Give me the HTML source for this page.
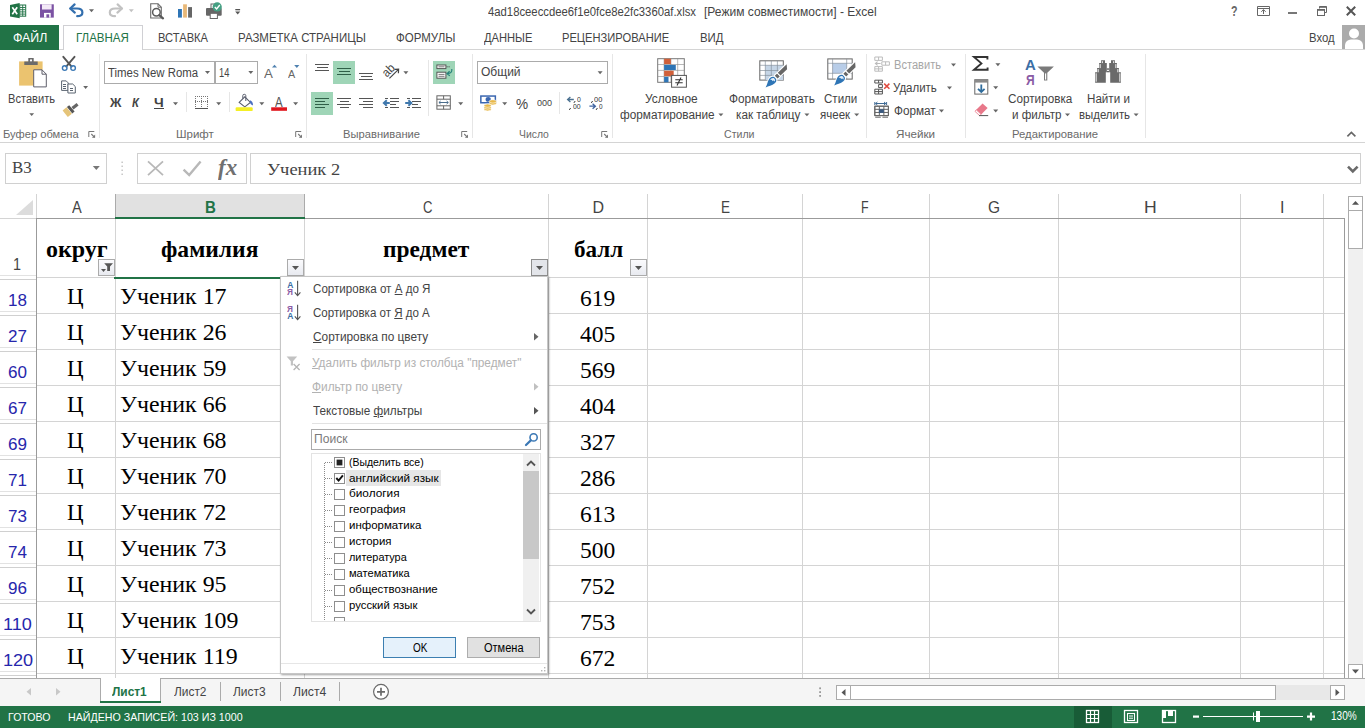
<!DOCTYPE html>
<html lang="ru"><head><meta charset="utf-8"><title>Excel</title>
<style>
html,body{margin:0;padding:0;}
body{width:1365px;height:728px;overflow:hidden;background:#fff;position:relative;font-family:"Liberation Sans",sans-serif;}
.b{position:absolute;}
.t{position:absolute;white-space:pre;transform-origin:0 0;}
.t u{text-decoration:underline;text-underline-offset:1px;}
svg.ov{position:absolute;left:0;top:0;pointer-events:none;}
</style></head><body>
<div id="boxes">
<div class="b" style="left:0px;top:49px;width:1365px;height:1px;background:#d4d4d4;"></div>
<div class="b" style="left:0px;top:25px;width:59px;height:25px;background:#217346;"></div>
<div class="b" style="left:63px;top:25px;width:80px;height:25px;background:#fff;border:1px solid #d0d0d4;border-bottom:none;box-sizing:border-box;"></div>
<div class="b" style="left:1342px;top:25px;width:23px;height:24px;background:#ababab;"></div>
<div class="b" style="left:0px;top:142px;width:1365px;height:1px;background:#d4d4d4;"></div>
<div class="b" style="left:99px;top:54px;width:1px;height:84px;background:#e6e6e6;"></div>
<div class="b" style="left:306px;top:54px;width:1px;height:84px;background:#e6e6e6;"></div>
<div class="b" style="left:472px;top:54px;width:1px;height:84px;background:#e6e6e6;"></div>
<div class="b" style="left:612px;top:54px;width:1px;height:84px;background:#e6e6e6;"></div>
<div class="b" style="left:866px;top:54px;width:1px;height:84px;background:#e6e6e6;"></div>
<div class="b" style="left:965px;top:54px;width:1px;height:84px;background:#e6e6e6;"></div>
<div class="b" style="left:1145px;top:54px;width:1px;height:84px;background:#e6e6e6;"></div>
<div class="b" style="left:104px;top:61px;width:111px;height:23px;background:#fff;border:1px solid #ababab;box-sizing:border-box;"></div>
<div class="b" style="left:214px;top:61px;width:44px;height:23px;background:#fff;border:1px solid #ababab;box-sizing:border-box;"></div>
<div class="b" style="left:154px;top:108px;width:10px;height:1px;background:#444;"></div>
<div class="b" style="left:186px;top:92px;width:1px;height:20px;background:#e6e6e6;"></div>
<div class="b" style="left:229px;top:92px;width:1px;height:20px;background:#e6e6e6;"></div>
<div class="b" style="left:333px;top:61px;width:22px;height:23px;background:#9fd5b7;"></div>
<div class="b" style="left:311px;top:92px;width:22px;height:23px;background:#9fd5b7;"></div>
<div class="b" style="left:433px;top:61px;width:22px;height:23px;background:#9fd5b7;"></div>
<div class="b" style="left:428px;top:60px;width:1px;height:56px;background:#e6e6e6;"></div>
<div class="b" style="left:477px;top:61px;width:131px;height:23px;background:#fff;border:1px solid #ababab;box-sizing:border-box;"></div>
<div class="b" style="left:559px;top:92px;width:1px;height:22px;background:#e6e6e6;"></div>
<div class="b" style="left:5px;top:153px;width:102px;height:31px;background:#fff;border:1px solid #d0d0d0;box-sizing:border-box;"></div>
<div class="b" style="left:137px;top:153px;width:110px;height:31px;background:#fff;border:1px solid #d0d0d0;box-sizing:border-box;"></div>
<div class="b" style="left:250px;top:153px;width:1111px;height:31px;background:#fff;border:1px solid #d0d0d0;box-sizing:border-box;"></div>
<div class="b" style="left:116px;top:194px;width:188px;height:23px;background:#e1e1e1;"></div>
<div class="b" style="left:115px;top:194px;width:1px;height:24px;background:#ababab;"></div>
<div class="b" style="left:304px;top:194px;width:1px;height:24px;background:#ababab;"></div>
<div class="b" style="left:548px;top:194px;width:1px;height:24px;background:#d4d4d4;"></div>
<div class="b" style="left:647px;top:194px;width:1px;height:24px;background:#d4d4d4;"></div>
<div class="b" style="left:802px;top:194px;width:1px;height:24px;background:#d4d4d4;"></div>
<div class="b" style="left:929px;top:194px;width:1px;height:24px;background:#d4d4d4;"></div>
<div class="b" style="left:1058px;top:194px;width:1px;height:24px;background:#d4d4d4;"></div>
<div class="b" style="left:1240px;top:194px;width:1px;height:24px;background:#d4d4d4;"></div>
<div class="b" style="left:1323px;top:194px;width:1px;height:24px;background:#d4d4d4;"></div>
<div class="b" style="left:36px;top:194px;width:1px;height:24px;background:#d4d4d4;"></div>
<div class="b" style="left:37px;top:277px;width:1307px;height:1px;background:#d4d4d4;"></div>
<div class="b" style="left:37px;top:313px;width:1307px;height:1px;background:#d4d4d4;"></div>
<div class="b" style="left:37px;top:349px;width:1307px;height:1px;background:#d4d4d4;"></div>
<div class="b" style="left:37px;top:385px;width:1307px;height:1px;background:#d4d4d4;"></div>
<div class="b" style="left:37px;top:421px;width:1307px;height:1px;background:#d4d4d4;"></div>
<div class="b" style="left:37px;top:457px;width:1307px;height:1px;background:#d4d4d4;"></div>
<div class="b" style="left:37px;top:493px;width:1307px;height:1px;background:#d4d4d4;"></div>
<div class="b" style="left:37px;top:529px;width:1307px;height:1px;background:#d4d4d4;"></div>
<div class="b" style="left:37px;top:565px;width:1307px;height:1px;background:#d4d4d4;"></div>
<div class="b" style="left:37px;top:601px;width:1307px;height:1px;background:#d4d4d4;"></div>
<div class="b" style="left:37px;top:637px;width:1307px;height:1px;background:#d4d4d4;"></div>
<div class="b" style="left:37px;top:673px;width:1307px;height:1px;background:#d4d4d4;"></div>
<div class="b" style="left:115px;top:219px;width:1px;height:459px;background:#d4d4d4;"></div>
<div class="b" style="left:304px;top:219px;width:1px;height:459px;background:#d4d4d4;"></div>
<div class="b" style="left:548px;top:219px;width:1px;height:459px;background:#d4d4d4;"></div>
<div class="b" style="left:647px;top:219px;width:1px;height:459px;background:#d4d4d4;"></div>
<div class="b" style="left:802px;top:219px;width:1px;height:459px;background:#d4d4d4;"></div>
<div class="b" style="left:929px;top:219px;width:1px;height:459px;background:#d4d4d4;"></div>
<div class="b" style="left:1058px;top:219px;width:1px;height:459px;background:#d4d4d4;"></div>
<div class="b" style="left:1240px;top:219px;width:1px;height:459px;background:#d4d4d4;"></div>
<div class="b" style="left:1323px;top:219px;width:1px;height:459px;background:#d4d4d4;"></div>
<div class="b" style="left:0px;top:218px;width:36px;height:1px;background:#d4d4d4;"></div>
<div class="b" style="left:36px;top:218px;width:1309px;height:1px;background:#9b9b9b;"></div>
<div class="b" style="left:36px;top:218px;width:1px;height:460px;background:#9b9b9b;"></div>
<div class="b" style="left:1344px;top:218px;width:1px;height:460px;background:#9b9b9b;"></div>
<div class="b" style="left:0px;top:275px;width:36px;height:1px;background:#e2e2e2;"></div>
<div class="b" style="left:0px;top:279px;width:36px;height:1px;background:#d0d0d0;"></div>
<div class="b" style="left:0px;top:311px;width:36px;height:1px;background:#e2e2e2;"></div>
<div class="b" style="left:0px;top:315px;width:36px;height:1px;background:#d0d0d0;"></div>
<div class="b" style="left:0px;top:347px;width:36px;height:1px;background:#e2e2e2;"></div>
<div class="b" style="left:0px;top:351px;width:36px;height:1px;background:#d0d0d0;"></div>
<div class="b" style="left:0px;top:383px;width:36px;height:1px;background:#e2e2e2;"></div>
<div class="b" style="left:0px;top:387px;width:36px;height:1px;background:#d0d0d0;"></div>
<div class="b" style="left:0px;top:419px;width:36px;height:1px;background:#e2e2e2;"></div>
<div class="b" style="left:0px;top:423px;width:36px;height:1px;background:#d0d0d0;"></div>
<div class="b" style="left:0px;top:455px;width:36px;height:1px;background:#e2e2e2;"></div>
<div class="b" style="left:0px;top:459px;width:36px;height:1px;background:#d0d0d0;"></div>
<div class="b" style="left:0px;top:491px;width:36px;height:1px;background:#e2e2e2;"></div>
<div class="b" style="left:0px;top:495px;width:36px;height:1px;background:#d0d0d0;"></div>
<div class="b" style="left:0px;top:527px;width:36px;height:1px;background:#e2e2e2;"></div>
<div class="b" style="left:0px;top:531px;width:36px;height:1px;background:#d0d0d0;"></div>
<div class="b" style="left:0px;top:563px;width:36px;height:1px;background:#e2e2e2;"></div>
<div class="b" style="left:0px;top:567px;width:36px;height:1px;background:#d0d0d0;"></div>
<div class="b" style="left:0px;top:599px;width:36px;height:1px;background:#e2e2e2;"></div>
<div class="b" style="left:0px;top:603px;width:36px;height:1px;background:#d0d0d0;"></div>
<div class="b" style="left:0px;top:635px;width:36px;height:1px;background:#e2e2e2;"></div>
<div class="b" style="left:0px;top:639px;width:36px;height:1px;background:#d0d0d0;"></div>
<div class="b" style="left:0px;top:671px;width:36px;height:1px;background:#e2e2e2;"></div>
<div class="b" style="left:0px;top:675px;width:36px;height:1px;background:#d0d0d0;"></div>
<div class="b" style="left:114px;top:277px;width:191px;height:2px;background:#217346;"></div>
<div class="b" style="left:115px;top:217px;width:190px;height:2px;background:#217346;"></div>
<div class="b" style="left:98px;top:259px;width:17px;height:17px;background:linear-gradient(#fbfbfd,#e8eaf0);border:1px solid #ababab;box-sizing:border-box;"></div>
<div class="b" style="left:287px;top:259px;width:17px;height:17px;background:linear-gradient(#fbfbfd,#e8eaf0);border:1px solid #ababab;box-sizing:border-box;"></div>
<div class="b" style="left:531px;top:259px;width:17px;height:17px;background:#e3e5ea;border:1px solid #8e8e8e;box-sizing:border-box;"></div>
<div class="b" style="left:630px;top:259px;width:17px;height:17px;background:linear-gradient(#fbfbfd,#e8eaf0);border:1px solid #ababab;box-sizing:border-box;"></div>
<div class="b popup" style="left:280px;top:276px;width:268px;height:398px;background:#fff;border:1px solid #c6c6c6;box-sizing:border-box;box-shadow:1px 1px 2px rgba(0,0,0,.38);"></div>
<div class="b" style="left:312px;top:349px;width:235px;height:1px;background:#e2e2e2;"></div>
<div class="b" style="left:312px;top:423px;width:235px;height:1px;background:#e2e2e2;"></div>
<div class="b" style="left:311px;top:429px;width:230px;height:21px;background:#fff;border:1px solid #ababab;box-sizing:border-box;"></div>
<div class="b list" style="left:311px;top:453px;width:230px;height:169px;background:#fff;border:1px solid #e3e3e3;box-sizing:border-box;"></div>
<div class="b" style="left:523px;top:454px;width:16px;height:167px;background:#f0f0f0;"></div>
<div class="b" style="left:523px;top:471px;width:16px;height:88px;background:#c8c8c8;"></div>
<div class="b" style="left:346px;top:470px;width:95px;height:16px;background:#e6e6e6;"></div>
<div class="b" style="left:334px;top:457px;width:11px;height:11px;background:#fff;border:1px solid #8e8e8e;box-sizing:border-box;"></div>
<div class="b" style="left:334px;top:473px;width:11px;height:11px;background:#fff;border:1px solid #8e8e8e;box-sizing:border-box;"></div>
<div class="b" style="left:334px;top:489px;width:11px;height:11px;background:#fff;border:1px solid #8e8e8e;box-sizing:border-box;"></div>
<div class="b" style="left:334px;top:505px;width:11px;height:11px;background:#fff;border:1px solid #8e8e8e;box-sizing:border-box;"></div>
<div class="b" style="left:334px;top:521px;width:11px;height:11px;background:#fff;border:1px solid #8e8e8e;box-sizing:border-box;"></div>
<div class="b" style="left:334px;top:537px;width:11px;height:11px;background:#fff;border:1px solid #8e8e8e;box-sizing:border-box;"></div>
<div class="b" style="left:334px;top:553px;width:11px;height:11px;background:#fff;border:1px solid #8e8e8e;box-sizing:border-box;"></div>
<div class="b" style="left:334px;top:569px;width:11px;height:11px;background:#fff;border:1px solid #8e8e8e;box-sizing:border-box;"></div>
<div class="b" style="left:334px;top:585px;width:11px;height:11px;background:#fff;border:1px solid #8e8e8e;box-sizing:border-box;"></div>
<div class="b" style="left:334px;top:601px;width:11px;height:11px;background:#fff;border:1px solid #8e8e8e;box-sizing:border-box;"></div>
<div class="b" style="left:334px;top:617px;width:11px;height:4px;background:#fff;border:1px solid #8e8e8e;box-sizing:border-box;border-bottom:none;"></div>
<div class="b" style="left:383px;top:637px;width:73px;height:21px;background:#e5f1fb;border:1px solid #3c7fb1;box-sizing:border-box;"></div>
<div class="b" style="left:467px;top:637px;width:73px;height:21px;background:#e1e1e1;border:1px solid #adadad;box-sizing:border-box;"></div>
<div class="b" style="left:281px;top:663px;width:266px;height:1px;background:#e6e6e6;"></div>
<div class="b" style="left:0px;top:678px;width:1365px;height:28px;background:#f5f5f5;"></div>
<div class="b" style="left:0px;top:678px;width:1365px;height:1px;background:#ababab;"></div>
<div class="b" style="left:100px;top:678px;width:61px;height:24px;background:#fff;"></div>
<div class="b" style="left:100px;top:678px;width:1px;height:24px;background:#ababab;"></div>
<div class="b" style="left:160px;top:678px;width:1px;height:24px;background:#ababab;"></div>
<div class="b" style="left:100px;top:701px;width:61px;height:2px;background:#217346;"></div>
<div class="b" style="left:220px;top:682px;width:1px;height:19px;background:#ababab;"></div>
<div class="b" style="left:280px;top:682px;width:1px;height:19px;background:#ababab;"></div>
<div class="b" style="left:339px;top:682px;width:1px;height:19px;background:#ababab;"></div>
<div class="b" style="left:836px;top:685px;width:494px;height:15px;background:#e8e8e8;"></div>
<div class="b" style="left:836px;top:685px;width:15px;height:15px;background:#fff;border:1px solid #ababab;box-sizing:border-box;"></div>
<div class="b" style="left:850px;top:685px;width:426px;height:15px;background:#fff;border:1px solid #ababab;box-sizing:border-box;"></div>
<div class="b" style="left:1330px;top:685px;width:15px;height:15px;background:#fff;border:1px solid #ababab;box-sizing:border-box;"></div>
<div class="b" style="left:1348px;top:196px;width:15px;height:483px;background:#f0f0f0;"></div>
<div class="b" style="left:1348px;top:196px;width:15px;height:15px;background:#fff;border:1px solid #ababab;box-sizing:border-box;"></div>
<div class="b" style="left:1348px;top:210px;width:15px;height:39px;background:#fff;border:1px solid #ababab;box-sizing:border-box;"></div>
<div class="b" style="left:1348px;top:664px;width:15px;height:15px;background:#fff;border:1px solid #ababab;box-sizing:border-box;"></div>
<div class="b" style="left:0px;top:706px;width:1365px;height:22px;background:#217346;"></div>
<div class="b" style="left:1074px;top:706px;width:38px;height:22px;background:#185c37;"></div>
</div>
<svg class="ov" width="1365" height="728" viewBox="0 0 1365 728">
<polygon points="33,200 33,215 16,215" fill="#dcdcdc"/>
<path d="M104.2 263.2 h8.8 l-3 3.4 v4.4 h-2.8 v-4.4 z" fill="#555"/>
<path d="M101 269 h5 l-2.5 2.9 z" fill="#555"/>
<path d="M292 266 h7 l-3.5 4 z" fill="#555"/>
<path d="M536 266 h7 l-3.5 4 z" fill="#555"/>
<path d="M635 266 h7 l-3.5 4 z" fill="#555"/>
<path d="M534 333 l4.5 3.8 l-4.5 3.8z" fill="#666"/>
<path d="M534 383 l4.5 3.8 l-4.5 3.8z" fill="#c0c0c0"/>
<path d="M534 407 l4.5 3.8 l-4.5 3.8z" fill="#555"/>
<path d="M325 462.5 H333" stroke="#8a8a8a" stroke-width="1" stroke-dasharray="1 1"/>
<path d="M325 478.5 H333" stroke="#8a8a8a" stroke-width="1" stroke-dasharray="1 1"/>
<path d="M325 494.5 H333" stroke="#8a8a8a" stroke-width="1" stroke-dasharray="1 1"/>
<path d="M325 510.5 H333" stroke="#8a8a8a" stroke-width="1" stroke-dasharray="1 1"/>
<path d="M325 526.5 H333" stroke="#8a8a8a" stroke-width="1" stroke-dasharray="1 1"/>
<path d="M325 542.5 H333" stroke="#8a8a8a" stroke-width="1" stroke-dasharray="1 1"/>
<path d="M325 558.5 H333" stroke="#8a8a8a" stroke-width="1" stroke-dasharray="1 1"/>
<path d="M325 574.5 H333" stroke="#8a8a8a" stroke-width="1" stroke-dasharray="1 1"/>
<path d="M325 590.5 H333" stroke="#8a8a8a" stroke-width="1" stroke-dasharray="1 1"/>
<path d="M325 606.5 H333" stroke="#8a8a8a" stroke-width="1" stroke-dasharray="1 1"/>
<path d="M324.5 463 V621" stroke="#8a8a8a" stroke-width="1" stroke-dasharray="1 1"/>
<rect x="336.6" y="459.6" width="5.8" height="5.8" fill="#222"/>
<path d="M336.3 478 l2.3 2.6 l4.3 -5.2" stroke="#111" stroke-width="1.9" fill="none"/>
<path d="M527 465.5 l4 -4 l4 4" stroke="#555" stroke-width="1.8" fill="none"/>
<path d="M527 609.5 l4 4 l4 -4" stroke="#555" stroke-width="1.8" fill="none"/>
<g fill="#b5b5b5"><rect x="544" y="667" width="1.4" height="1.4"/><rect x="541" y="670" width="1.4" height="1.4"/><rect x="544" y="670" width="1.4" height="1.4"/></g>
<path d="M31 688 v7.5 l-4.5 -3.75z" fill="#c8c8c8"/><path d="M56 688 v7.5 l4.5 -3.75z" fill="#c8c8c8"/>
<circle cx="381" cy="691.8" r="7.4" fill="#fff" stroke="#6a6a6a" stroke-width="1.2"/><path d="M377 691.8 h8 M381 687.8 v8" stroke="#6a6a6a" stroke-width="1.7"/>
<g fill="#9a9a9a"><rect x="819.2" y="687.4" width="1.8" height="1.8"/><rect x="819.2" y="691.2" width="1.8" height="1.8"/><rect x="819.2" y="695" width="1.8" height="1.8"/></g>
<path d="M845.5 689 v7 l-4 -3.5z" fill="#555"/><path d="M1335.5 689 v7 l4 -3.5z" fill="#555"/>
<path d="M1352 204.8 h7 l-3.5 -3.8z" fill="#555"/><path d="M1352 669.5 h7 l-3.5 4z" fill="#555"/>
<g stroke="#fff" fill="none"><rect x="1086.5" y="710.5" width="12" height="12" stroke-width="1.3"/><path d="M1090.5 710.5 v12 M1094.5 710.5 v12 M1086.5 714.5 h12 M1086.5 718.5 h12" stroke-width="1.2"/><rect x="1124.5" y="710.5" width="13" height="12" stroke-width="1.3"/><rect x="1127.5" y="713.5" width="7" height="7" stroke-width="1.1"/><path d="M1129 716 h4 M1129 718.2 h4" stroke-width="1"/><rect x="1162.5" y="710.5" width="13" height="12" stroke-width="1.3"/></g>
<rect x="1163" y="711" width="3" height="7" fill="#fff"/><rect x="1168" y="711" width="5" height="5" fill="#fff"/>
<rect x="1193" y="715.5" width="6" height="2.2" fill="#fff"/>
<rect x="1203" y="716" width="100" height="1" fill="#fff"/><rect x="1253" y="712.5" width="1" height="8" fill="#fff"/>
<rect x="1256" y="711" width="4" height="11" fill="#fff"/>
<path d="M1307 716.6 h8 M1311 712.6 v8" stroke="#fff" stroke-width="2.2"/>
<path d="M10 5 L19.7 3 V18.2 L10 16.4z" fill="#217346"/>
<rect x="19.7" y="5" width="6" height="11.2" fill="#fff" stroke="#217346" stroke-width="1"/>
<path d="M20 7.5 h5.5 M20 9.7 h5.5 M20 11.9 h5.5 M20 14.1 h5.5 M22.7 5 v11" stroke="#217346" stroke-width="0.9"/>
<path d="M12.3 7.3 L17.2 14.2 M17.2 7.3 L12.3 14.2" stroke="#fff" stroke-width="1.7"/>
<rect x="40" y="4.3" width="13.8" height="13.3" fill="#7b52a3"/>
<rect x="42" y="4.3" width="9.6" height="5.2" fill="#f3e9f7"/>
<rect x="44" y="12.9" width="6.7" height="4.7" fill="#fff"/>
<rect x="46.4" y="14.3" width="2.8" height="3.3" fill="#7b52a3"/>
<path d="M70.5 8.5 H77 C81 8.5 82.4 10.6 82.4 12.5 C82.4 14.6 80.6 16.2 77.2 16.2" fill="none" stroke="#336fae" stroke-width="2.2" stroke-linecap="round"/>
<path d="M74.6 4.4 L70.2 8.5 L74.8 12.6" fill="none" stroke="#336fae" stroke-width="2.2" stroke-linecap="round" stroke-linejoin="round"/>
<path d="M89 9.2 h5 l-2.5 3z" fill="#666"/>
<path d="M121.7 8.5 H115.2 C111.2 8.5 109.8 10.6 109.8 12.5 C109.8 14.6 111.6 16.2 115 16.2" fill="none" stroke="#c2c2c2" stroke-width="2.2" stroke-linecap="round"/>
<path d="M117.6 4.4 L122 8.5 L117.4 12.6" fill="none" stroke="#c2c2c2" stroke-width="2.2" stroke-linecap="round" stroke-linejoin="round"/>
<path d="M128.8 9.2 h5 l-2.5 3z" fill="#c2c2c2"/>
<path d="M150.7 3.8 H158 L161.3 7.2 V18 H150.7z" fill="#fff" stroke="#6a6a6a" stroke-width="1.1"/>
<path d="M158 3.8 V7.2 H161.3" fill="none" stroke="#6a6a6a" stroke-width="1"/>
<circle cx="156.4" cy="12.2" r="3.8" fill="#fff" stroke="#5a5a5a" stroke-width="1.5"/>
<path d="M159.2 15.2 L163 18.4" stroke="#5a5a5a" stroke-width="2.2" stroke-linecap="round"/>
<rect x="178" y="9" width="3.9" height="8.6" fill="#2e75b6"/><rect x="183.1" y="4.3" width="3.8" height="13.3" fill="#e8b878"/><rect x="188.1" y="7.1" width="3.9" height="10.5" fill="#666"/>
<rect x="211" y="4" width="6" height="5" fill="#fff" stroke="#666" stroke-width="1"/>
<rect x="206" y="8" width="15.7" height="7.7" rx="1" fill="#666"/>
<rect x="210.2" y="13.3" width="7.2" height="5.2" fill="#fff" stroke="#666" stroke-width="1"/>
<circle cx="217.2" cy="6.9" r="4.6" fill="#45a083"/>
<path d="M214.8 7 l1.8 1.9 l3.2 -3.9" fill="none" stroke="#fff" stroke-width="1.4"/>
<rect x="235.3" y="9" width="4.8" height="1.3" fill="#555"/>
<path d="M235.2 11.6 h5 l-2.5 2.8z" fill="#555"/>
<path d="M1257.5 6.5 h12 v9 h-12z" fill="none" stroke="#666" stroke-width="1"/><path d="M1257.5 8.5 h12" stroke="#666" stroke-width="1"/>
<path d="M1263.5 14 v-4.2 M1261.3 11.8 l2.2 -2.2 l2.2 2.2" fill="none" stroke="#666" stroke-width="1"/>
<rect x="1288" y="12" width="9" height="2" fill="#777"/>
<path d="M1319.5 8.5 v-2 h7 v6 h-2" fill="none" stroke="#666" stroke-width="1"/><path d="M1319.5 7 h7" stroke="#666" stroke-width="1.6"/>
<rect x="1317.5" y="9.5" width="7" height="6" fill="#fff" stroke="#666" stroke-width="1"/><path d="M1317.5 10 h7" stroke="#666" stroke-width="1.6"/>
<path d="M1346.8 6.8 l8.4 8.4 M1355.2 6.8 l-8.4 8.4" stroke="#555" stroke-width="2"/>
<circle cx="1354" cy="33.5" r="5" fill="#fff"/><path d="M1345 49 v-4 a6 6 0 0 1 6 -5.5 h6 a6 6 0 0 1 6 5.5 v4z" fill="#fff"/>
<rect x="19.1" y="61.4" width="23.5" height="24.2" fill="#ebc36f"/>
<path d="M24.3 61.4 h4 v-3.3 h5.4 v3.3 h4 v3.5 h-13.4z" fill="#6b6b6b"/><circle cx="31" cy="60.4" r="1.1" fill="#fff"/>
<path d="M33.7 69.8 H42 L46.3 74.2 V86.9 H33.7z" fill="#fff" stroke="#5f5f6b" stroke-width="1"/><path d="M42 69.8 V74.2 H46.3" fill="none" stroke="#5f5f6b" stroke-width="1"/>
<path d="M29.3 113.3 h4.8 l-2.4 2.6z" fill="#666"/>
<path d="M63.3 56.8 L71.6 66.6 M74.5 56.8 L66.2 66.6" stroke="#555" stroke-width="1.9" stroke-linecap="round"/>
<circle cx="64.7" cy="68.1" r="2.3" fill="none" stroke="#3b78b5" stroke-width="1.4"/><circle cx="73.1" cy="68.1" r="2.3" fill="none" stroke="#3b78b5" stroke-width="1.4"/>
<path d="M61.6 80.9 h4.6 l2 2 v7.5 h-6.6z" fill="#fff" stroke="#5a6470" stroke-width="1"/>
<path d="M63 84.5 h3 M63 86.5 h3 M63 88.5 h3" stroke="#5a6470" stroke-width="1" shape-rendering="crispEdges"/>
<path d="M67.9 84 h4.8 l2.6 2.6 v6.4 h-7.4z" fill="#fff" stroke="#5a6470" stroke-width="1"/>
<path d="M69.6 88.5 h3.8 M69.6 90.5 h3.8" stroke="#5a6470" stroke-width="1" shape-rendering="crispEdges"/>
<path d="M83.2 86 h4.9 l-2.45 3z" fill="#666"/>
<path d="M77.6 104.2 L72.5 108.2" stroke="#666" stroke-width="3.2"/>
<path d="M69.2 105.2 L74.6 111.6 L72.3 113.4 L66.9 107z" fill="#555"/>
<path d="M66.5 107.3 L71.9 113.8 L67.8 117 L62.6 110.5z" fill="#e5c479"/>
<path d="M205 71 h5 l-2.5 3z" fill="#666"/>
<path d="M248.3 71 h5 l-2.5 3z" fill="#666"/>
<rect x="214" y="61" width="2" height="23" fill="#ababab"/>
<path d="M272 67.6 h5 l-2.5 -2.8z" fill="#4f81b0"/><path d="M294.2 65 h5.2 l-2.6 2.9z" fill="#4f81b0"/>
<path d="M173 102.3 h5 l-2.5 3z" fill="#666"/>
<g stroke="#777" stroke-width="1" stroke-dasharray="1 1" shape-rendering="crispEdges"><path d="M195 96.5 H208 M195 101.5 H208 M195.5 96 V107 M201.5 96 V107 M207.5 96 V107"/></g><path d="M195 108.5 H208" stroke="#555" stroke-width="1" shape-rendering="crispEdges"/>
<path d="M216.2 102.3 h5 l-2.5 3z" fill="#666"/>
<path d="M239.2 102.4 L244.8 96.8 L250.4 102.4 L244.8 106.9z" fill="#fff" stroke="#5a5f6e" stroke-width="1.1"/>
<path d="M242.8 98.6 V95.6 a1.5 1.3 0 0 1 3 0 V101" fill="none" stroke="#5a5f6e" stroke-width="1"/>
<path d="M250 100.3 q3 1 3 5.2 q-2.2 -0.6 -3.2 -3z" fill="#4a6fc0"/>
<rect x="235.6" y="107.3" width="17.1" height="3.8" rx="1.2" fill="#f4ef25"/>
<path d="M259.3 102.3 h5 l-2.5 3z" fill="#666"/>
<rect x="271.2" y="107.3" width="15.8" height="3.5" fill="#e0161d"/>
<path d="M293.1 102.3 h5 l-2.5 3z" fill="#666"/>
<path d="M315 64.5 H329 M316.5 67.5 H327.5 M315 70.5 H329 " stroke="#555" stroke-width="1.1" shape-rendering="crispEdges"/>
<path d="M337 68.5 H351 M338.5 71.5 H349.5 M337 74.5 H351 " stroke="#2f5f47" stroke-width="1.1" shape-rendering="crispEdges"/>
<path d="M359 73.5 H373 M360.5 76.5 H371.5 M359 79.5 H373 " stroke="#555" stroke-width="1.1" shape-rendering="crispEdges"/>
<path d="M389.4 78.4 L398 69.8" stroke="#444" stroke-width="1.2"/><path d="M394.6 69.4 L398.6 69.2 L398.4 73.2" fill="none" stroke="#444" stroke-width="1.2"/>
<path d="M403.4 71.2 h5 l-2.5 3z" fill="#666"/>
<path d="M315 98.5 H329 M315 101.5 H325 M315 104.5 H329 M315 107.5 H325 " stroke="#2f5f47" stroke-width="1.1" shape-rendering="crispEdges"/>
<path d="M337 98.5 H351 M339.5 101.5 H348.5 M337 104.5 H351 M339.5 107.5 H348.5 " stroke="#555" stroke-width="1.1" shape-rendering="crispEdges"/>
<path d="M359 98.5 H373 M363 101.5 H373 M359 104.5 H373 M363 107.5 H373 " stroke="#555" stroke-width="1.1" shape-rendering="crispEdges"/>
<path d="M385 98.5 H388 M390 98.5 H399 M390 101.5 H399 M390 104.5 H395.5 M385 107.5 H388 M390 107.5 H399 " stroke="#555" stroke-width="1.1" shape-rendering="crispEdges"/>
<path d="M389.8 103 H384.5 M386.8 100.2 L383.8 103 L386.8 105.8" fill="none" stroke="#3f78ad" stroke-width="1.9"/>
<path d="M407 98.5 H410 M412 98.5 H421 M412 101.5 H421 M412 104.5 H417.5 M407 107.5 H410 M412 107.5 H421 " stroke="#555" stroke-width="1.1" shape-rendering="crispEdges"/>
<path d="M405.2 103 H410.6 M408.4 100.2 L411.4 103 L408.4 105.8" fill="none" stroke="#3f78ad" stroke-width="1.9"/>
<rect x="436.9" y="65" width="9" height="3.6" fill="#fff" stroke="#555" stroke-width="1"/><path d="M438.5 66.8 h6" stroke="#555" stroke-width="0.8"/><path d="M446.5 66.8 h3.2" stroke="#555" stroke-width="1" stroke-dasharray="1.2 0.8"/>
<rect x="436.9" y="72.2" width="9" height="6" fill="#fff" stroke="#555" stroke-width="1"/><path d="M438.5 74.4 h6 M438.5 76.3 h6" stroke="#555" stroke-width="0.8"/>
<path d="M451.8 69 q0.6 4.4 -4.4 4.6 M449.6 71.3 L447 73.7 L449.8 75.8" fill="none" stroke="#27827a" stroke-width="1.2"/>
<rect x="436.9" y="95.8" width="13.4" height="13.4" fill="#fff" stroke="#666" stroke-width="1"/><path d="M436.9 99.2 h13.4 M436.9 105.8 h13.4 M443.6 95.8 v3.4 M443.6 105.8 v3.4" stroke="#666" stroke-width="1"/>
<path d="M439 102.5 h9.2 M440.6 101 l-1.7 1.5 l1.7 1.5 M446.6 101 l1.7 1.5 l-1.7 1.5" fill="none" stroke="#4a6d8c" stroke-width="1"/>
<path d="M458.2 102.3 h5 l-2.5 3z" fill="#666"/>
<path d="M597.6 71.2 h5 l-2.5 3z" fill="#666"/>
<rect x="480.1" y="95.3" width="16" height="8.2" fill="#3a66b0"/><rect x="481.6" y="96.8" width="13" height="5.2" fill="#fff"/><ellipse cx="488.2" cy="99.4" rx="2.6" ry="2.3" fill="#3a66b0"/>
<g fill="#e8b94a" stroke="#fff" stroke-width="0.6"><ellipse cx="492.8" cy="103.3" rx="3.6" ry="1.7"/><ellipse cx="492.8" cy="101.4" rx="3.6" ry="1.7"/><ellipse cx="487.6" cy="109.2" rx="3.6" ry="1.7"/><ellipse cx="487.6" cy="107.4" rx="3.6" ry="1.7"/><ellipse cx="487.6" cy="105.6" rx="3.6" ry="1.7"/></g>
<path d="M502.2 102.3 h5 l-2.5 3z" fill="#666"/>
<path d="M573.8 99.5 H568 M570.4 97 L567.6 99.5 L570.4 102" fill="none" stroke="#4a7090" stroke-width="1.3"/>
<path d="M589.4 106.2 H595 M592.6 103.7 L595.4 106.2 L592.6 108.7" fill="none" stroke="#3f63a0" stroke-width="1.3"/>
<path d="M575.2 101 l-1.3 1.9 M570.6 108 l-1.3 1.9 M592.6 101 l-1.3 1.9 M597.4 108 l-1.3 1.9" stroke="#333" stroke-width="1"/>
<path d="M88.8 137 V131.5 H94.3" fill="none" stroke="#777" stroke-width="1"/><path d="M91.3 134 L94.6 137.3" stroke="#777" stroke-width="1.1"/><path d="M95.1 134.6 V137.8 H91.89999999999999z" fill="#777"/>
<path d="M295.7 137 V131.5 H301.2" fill="none" stroke="#777" stroke-width="1"/><path d="M298.2 134 L301.5 137.3" stroke="#777" stroke-width="1.1"/><path d="M302.0 134.6 V137.8 H298.8z" fill="#777"/>
<path d="M461.7 137 V131.5 H467.2" fill="none" stroke="#777" stroke-width="1"/><path d="M464.2 134 L467.5 137.3" stroke="#777" stroke-width="1.1"/><path d="M468.0 134.6 V137.8 H464.8z" fill="#777"/>
<path d="M601.7 137 V131.5 H607.2" fill="none" stroke="#777" stroke-width="1"/><path d="M604.2 134 L607.5 137.3" stroke="#777" stroke-width="1.1"/><path d="M608.0 134.6 V137.8 H604.8000000000001z" fill="#777"/>
<path d="M1347.4 136.4 l4 -4 l4 4" fill="none" stroke="#666" stroke-width="1.6"/>
<rect x="657.7" y="58.7" width="26.6" height="23.6" fill="#fff" stroke="#777" stroke-width="1"/>
<path d="M657.7 64.5 h26.6 M657.7 70.4 h26.6 M657.7 76.5 h26.6 M664.1 58.7 v23.6 M670.9 58.7 v23.6 M677.7 58.7 v23.6" stroke="#8a8a8a" stroke-width="0.8" fill="none" opacity="0.75"/>
<rect x="664.1" y="58.7" width="6.8" height="5.4" fill="#d0603a"/><rect x="664.1" y="64.9" width="11.7" height="5.1" fill="#2e75b6"/><rect x="664.1" y="70.8" width="9.6" height="5.3" fill="#d0603a"/><rect x="664.1" y="76.9" width="4.4" height="5.4" fill="#2e75b6"/>
<rect x="671.6" y="75.4" width="14.8" height="11.8" fill="#fff" stroke="#555" stroke-width="1"/>
<path d="M675.3 79.8 h7.4 M675.3 82.8 h7.4 M681 77.4 l-4 8" stroke="#333" stroke-width="1.1" fill="none"/>
<path d="M718.4 113.4 h5 l-2.5 2.8z" fill="#666"/>
<rect x="759.8" y="60.8" width="23.5" height="19.3" fill="#fff" stroke="#666" stroke-width="1"/>
<rect x="765.3" y="65.3" width="18" height="14.8" fill="#c5d5e6"/>
<path d="M759.8 65.3 h23.5 M759.8 70.5 h23.5 M759.8 75.4 h23.5 M765.3 60.8 v19.3 M771.3 60.8 v19.3 M777.4 60.8 v19.3" stroke="#7f8a96" stroke-width="0.8" fill="none" opacity="0.8"/>
<g transform="translate(765.6 87.4) rotate(-44.21)"><path d="M0 0 C3 -0.4 6 -3.6 10 -3.6 C12.6 -3.6 13.6 -1.6 13.6 0 C13.6 2.2 12 3.6 9.5 3.4 C6 3.2 3 0.8 0 0z" fill="#2e75b6" stroke="#fff" stroke-width="2.2" paint-order="stroke" stroke-linejoin="round"/><path d="M8.2 -2.2 C10.4 -2.8 12.2 -2 12.4 -0.4 C12.4 1 11.6 2 10.6 2.2 C11 0.8 10.4 0 9.4 0.4 C9.8 -1 9.4 -1.8 8.2 -2.2z" fill="#e3eefa"/><path d="M14.8 -2 H18 V2 H14.8z" fill="#666" stroke="#fff" stroke-width="2.2" paint-order="stroke" stroke-linejoin="round"/><path d="M19 -2 H31.3 L28.1 1.9 H19z" fill="#666" stroke="#fff" stroke-width="2.2" paint-order="stroke" stroke-linejoin="round"/></g>
<path d="M804.4 113.4 h5 l-2.5 2.8z" fill="#666"/>
<rect x="827.8" y="58.9" width="24.4" height="20.2" fill="#fff" stroke="#666" stroke-width="1"/>
<rect x="832.6" y="63.3" width="14.1" height="10" fill="#b8cde8"/>
<path d="M827.8 63.3 h24.4 M827.8 73.3 h24.4 M832.6 58.9 v20.2 M846.7 58.9 v20.2" stroke="#7f8a96" stroke-width="0.8" fill="none" opacity="0.8"/>
<g transform="translate(834.2 85.4) rotate(-44.34)"><path d="M0 0 C3 -0.4 6 -3.6 10 -3.6 C12.6 -3.6 13.6 -1.6 13.6 0 C13.6 2.2 12 3.6 9.5 3.4 C6 3.2 3 0.8 0 0z" fill="#2e75b6" stroke="#fff" stroke-width="2.2" paint-order="stroke" stroke-linejoin="round"/><path d="M8.2 -2.2 C10.4 -2.8 12.2 -2 12.4 -0.4 C12.4 1 11.6 2 10.6 2.2 C11 0.8 10.4 0 9.4 0.4 C9.8 -1 9.4 -1.8 8.2 -2.2z" fill="#e3eefa"/><path d="M14.8 -2 H18 V2 H14.8z" fill="#666" stroke="#fff" stroke-width="2.2" paint-order="stroke" stroke-linejoin="round"/><path d="M19 -2 H31.2 L28.0 1.9 H19z" fill="#666" stroke="#fff" stroke-width="2.2" paint-order="stroke" stroke-linejoin="round"/></g>
<path d="M854.2 113.4 h5 l-2.5 2.8z" fill="#666"/>
<path d="M874.8 57 h7.6 v3.4 h-7.6z M878.5999999999999 57 v3.4 " fill="#fff" stroke="#bcbcbc" stroke-width="1"/>
<path d="M881.8 61.8 h7.6 v3.4 h-7.6z M885.5999999999999 61.8 v3.4 " fill="#fff" stroke="#bcbcbc" stroke-width="1"/>
<path d="M874.8 66.6 h7.6 v4.6 h-7.6z M878.5999999999999 66.6 v4.6 M874.8 68.89999999999999 h7.6 " fill="#fff" stroke="#bcbcbc" stroke-width="1"/>
<path d="M880.6 63.5 H875.6 M877.6 61.6 L875.4 63.5 L877.6 65.4" fill="none" stroke="#bcbcbc" stroke-width="1.1"/>
<path d="M951 63.4 h5 l-2.5 3z" fill="#666"/>
<path d="M874.8 80.2 h7.6 v2.8 h-7.6z M878.5999999999999 80.2 v2.8 " fill="#fff" stroke="#555" stroke-width="1"/>
<path d="M878.6 84.6 h3.8 v3 h-3.8z " fill="#fff" stroke="#555" stroke-width="1"/>
<path d="M874.8 89.2 h7.6 v4.8 h-7.6z M878.5999999999999 89.2 v4.8 M874.8 91.60000000000001 h7.6 " fill="#fff" stroke="#555" stroke-width="1"/>
<path d="M884.2 83.6 l5.2 5.2 M889.4 83.6 l-5.2 5.2" stroke="#e04a3f" stroke-width="1.5"/>
<path d="M947 86.4 h5 l-2.5 3z" fill="#666"/>
<path d="M874.8 102 v3 M886.6 102 v3 M875.5 103.5 h10.4 M877.4 102 l-1.8 1.5 l1.8 1.5 M884 102 l1.8 1.5 l-1.8 1.5" fill="none" stroke="#3f6a94" stroke-width="1"/>
<rect x="874.8" y="106.2" width="13.6" height="9.4" fill="#e3ecf6"/>
<path d="M874.8 106.2 h13.6 v9.4 h-13.6z M879.3333333333333 106.2 v9.4 M883.8666666666667 106.2 v9.4 M874.8 109.33333333333334 h13.6 M874.8 112.46666666666667 h13.6 " fill="#fff" stroke="#666" stroke-width="1"/>
<rect x="878.9" y="109.3" width="5" height="3.6" fill="#3b5a80"/>
<path d="M875.2 117.2 h5.6 M882.4 117.2 h5.6" stroke="#666" stroke-width="1"/>
<rect x="874.8" y="106.2" width="13.6" height="9.4" fill="none" stroke="#666" stroke-width="1"/>
<path d="M939 109.6 h5 l-2.5 3z" fill="#666"/>
<path d="M987.4 59.4 V57 H974 L981.4 63.4 L974 69.8 H987.6 V67.4" fill="none" stroke="#333" stroke-width="1.9" stroke-linejoin="miter"/>
<path d="M995.4 63.2 h5 l-2.5 3z" fill="#666"/>
<rect x="974.8" y="79.7" width="13" height="14.4" fill="#fff" stroke="#666" stroke-width="1"/><rect x="974.8" y="79.7" width="13" height="2.9" fill="#8a8a8a"/>
<path d="M981.3 84.6 V92 M978 88.8 L981.3 92 L984.6 88.8" fill="none" stroke="#2f6c9c" stroke-width="1.8"/>
<path d="M993.2 86.3 h5 l-2.5 3z" fill="#666"/>
<path d="M982.6 103.4 L987.6 108 L981.2 114.4 L976.2 109.8z" fill="#e8788a"/><path d="M976.2 109.8 L981.2 114.4 L979.6 115.6 L975 111.4z" fill="#fff" stroke="#e8788a" stroke-width="0.8"/>
<path d="M979 115.6 H988.2" stroke="#555" stroke-width="1"/>
<path d="M993.2 109.4 h5 l-2.5 3z" fill="#666"/>
<path d="M1037.4 66.4 H1053.9 L1047.3 72.8 V80.6 H1044 V72.8z" fill="#7a7a7a"/><rect x="1045" y="73.4" width="1.2" height="6.2" fill="#fff"/>
<path d="M1065 113.4 h5 l-2.5 2.8z" fill="#666"/>
<path d="M1133.6 113.4 h5 l-2.5 2.8z" fill="#666"/>
<path d="M1105.8 63.1 L1105.0 63.1 L1105.0 60.2 L1101.1 60.2 L1101.1 63.1 L1099.1 63.1 L1099.1 68.1 L1097.1 68.1 L1097.1 72.3 L1095.1 72.3 L1095.1 82.7 L1105.8 82.7 L1105.8 72.3 L1106.8 72.3 L1106.8 63.1z" fill="#6a6a6a"/>
<rect x="1101.9" y="61.2" width="0.9" height="1.9" fill="#fff"/>
<rect x="1099.7" y="64.1" width="0.9" height="4.0" fill="#fff"/>
<rect x="1097.7" y="69.1" width="0.9" height="3.2" fill="#fff"/>
<rect x="1095.7" y="73.3" width="0.9" height="8.4" fill="#fff"/>
<path d="M1110.2 63.1 L1111.0 63.1 L1111.0 60.2 L1114.9 60.2 L1114.9 63.1 L1116.9 63.1 L1116.9 68.1 L1118.9 68.1 L1118.9 72.3 L1120.9 72.3 L1120.9 82.7 L1110.2 82.7 L1110.2 72.3 L1109.2 72.3 L1109.2 63.1z" fill="#6a6a6a"/>
<rect x="1113.2" y="61.2" width="0.9" height="1.9" fill="#fff"/>
<rect x="1115.4" y="64.1" width="0.9" height="4.0" fill="#fff"/>
<rect x="1117.4" y="69.1" width="0.9" height="3.2" fill="#fff"/>
<rect x="1119.4" y="73.3" width="0.9" height="8.4" fill="#fff"/>
<rect x="1106.8" y="68.3" width="2.4" height="4" fill="#6a6a6a"/><rect x="1107" y="69.8" width="2" height="1.1" fill="#fff"/>
<path d="M92.8 166 h7 l-3.5 4z" fill="#777"/>
<g fill="#b4b4b4"><rect x="121.5" y="161.6" width="1.3" height="1.3"/><rect x="121.5" y="165.6" width="1.3" height="1.3"/><rect x="121.5" y="169.6" width="1.3" height="1.3"/><rect x="121.5" y="173.6" width="1.3" height="1.3"/></g>
<path d="M148 161.4 L163 175.2 M163 161.4 L148 175.2" stroke="#b8b8b8" stroke-width="1.8" fill="none"/>
<path d="M183.6 169.6 L189.2 175 L200.6 161.4" stroke="#b8b8b8" stroke-width="2.4" fill="none"/>
<path d="M1348 166.6 l4.8 4.8 l4.8 -4.8" fill="none" stroke="#6a6a6a" stroke-width="2.6"/>
<path d="M297.6 280.8 V295.6 M294.8 292.40000000000003 L297.6 295.6 L300.40000000000003 292.40000000000003" fill="none" stroke="#555" stroke-width="1.1"/>
<path d="M297.6 304.8 V319.6 M294.8 316.40000000000003 L297.6 319.6 L300.40000000000003 316.40000000000003" fill="none" stroke="#555" stroke-width="1.1"/>
<path d="M286.6 356.6 H297.2 L293 361.2 V365.6 H290.8 V361.2z" fill="#c2c2c2"/>
<path d="M293.6 364 l6 6 M299.6 364 l-6 6" stroke="#b5b5b5" stroke-width="1.3"/>
<circle cx="533.6" cy="437.4" r="3.6" fill="#fff" stroke="#3b78b5" stroke-width="1.6"/><path d="M530.8 440.4 L526 445" stroke="#3b78b5" stroke-width="2.2" stroke-linecap="round"/>
</svg>
<div id="texts">
<span class="t" style='left:488.00px;top:5.40px;font:400 12px "Liberation Sans", sans-serif;line-height:14px;color:#444444;transform:scaleX(0.9419);'>4ad18ceeccdee6f1e0fce8e2fc3360af.xlsx</span>
<span class="t" style='left:704.00px;top:5.40px;font:400 12px "Liberation Sans", sans-serif;line-height:14px;color:#444444;transform:scaleX(1.0021);'>[Режим совместимости] - Excel</span>
<span class="t" style='left:12.60px;top:31.00px;font:400 12px "Liberation Sans", sans-serif;line-height:14px;color:#fff;transform:scaleX(1.0281);'>ФАЙЛ</span>
<span class="t" style='left:76.20px;top:31.00px;font:400 12px "Liberation Sans", sans-serif;line-height:14px;color:#217346;transform:scaleX(0.9600);'>ГЛАВНАЯ</span>
<span class="t" style='left:158.40px;top:31.00px;font:400 12px "Liberation Sans", sans-serif;line-height:14px;color:#444444;transform:scaleX(0.9293);'>ВСТАВКА</span>
<span class="t" style='left:238.40px;top:31.00px;font:400 12px "Liberation Sans", sans-serif;line-height:14px;color:#444444;transform:scaleX(0.9568);'>РАЗМЕТКА СТРАНИЦЫ</span>
<span class="t" style='left:395.60px;top:31.00px;font:400 12px "Liberation Sans", sans-serif;line-height:14px;color:#444444;transform:scaleX(0.9573);'>ФОРМУЛЫ</span>
<span class="t" style='left:484.00px;top:31.00px;font:400 12px "Liberation Sans", sans-serif;line-height:14px;color:#444444;transform:scaleX(0.9292);'>ДАННЫЕ</span>
<span class="t" style='left:562.40px;top:31.00px;font:400 12px "Liberation Sans", sans-serif;line-height:14px;color:#444444;transform:scaleX(0.9289);'>РЕЦЕНЗИРОВАНИЕ</span>
<span class="t" style='left:699.60px;top:31.00px;font:400 12px "Liberation Sans", sans-serif;line-height:14px;color:#444444;transform:scaleX(0.9501);'>ВИД</span>
<span class="t" style='left:1309.40px;top:30.80px;font:400 12px "Liberation Sans", sans-serif;line-height:14px;color:#444444;transform:scaleX(0.9431);'>Вход</span>
<span class="t" style='left:7.80px;top:91.80px;font:400 12px "Liberation Sans", sans-serif;line-height:14px;color:#444444;transform:scaleX(0.9247);'>Вставить</span>
<span class="t" style='left:3.40px;top:128.20px;font:400 10.5px "Liberation Sans", sans-serif;line-height:12px;color:#6a6a6a;transform:scaleX(1.0614);'>Буфер обмена</span>
<span class="t" style='left:108.00px;top:65.60px;font:400 12.5px "Liberation Sans", sans-serif;line-height:14px;color:#444444;transform:scaleX(0.9120);'>Times New Roma</span>
<span class="t" style='left:219.20px;top:65.60px;font:400 12.5px "Liberation Sans", sans-serif;line-height:14px;color:#444444;transform:scaleX(0.7454);'>14</span>
<span class="t" style='left:109.85px;top:96.20px;font:700 12px "Liberation Sans", sans-serif;line-height:14px;color:#444444;transform:scaleX(1.0500);'>Ж</span>
<span class="t" style='left:132.40px;top:96.20px;font:italic 700 12px "Liberation Sans", sans-serif;line-height:14px;color:#444444;transform:scaleX(0.9333);'>К</span>
<span class="t" style='left:154.40px;top:96.20px;font:700 12px "Liberation Sans", sans-serif;line-height:14px;color:#444444;transform:scaleX(1.1500);'>Ч</span>
<span class="t" style='left:176.00px;top:128.20px;font:400 10.5px "Liberation Sans", sans-serif;line-height:12px;color:#6a6a6a;transform:scaleX(1.0940);'>Шрифт</span>
<span class="t" style='left:343.00px;top:128.20px;font:400 10.5px "Liberation Sans", sans-serif;line-height:12px;color:#6a6a6a;transform:scaleX(1.0658);'>Выравнивание</span>
<span class="t" style='left:480.80px;top:65.40px;font:400 12.5px "Liberation Sans", sans-serif;line-height:14px;color:#444444;transform:scaleX(0.9624);'>Общий</span>
<span class="t" style='left:516.40px;top:94.60px;font:400 15px "Liberation Sans", sans-serif;line-height:17px;color:#444444;transform:scaleX(0.9077);'>%</span>
<span class="t" style='left:536.60px;top:97.00px;font:400 9.5px "Liberation Sans", sans-serif;line-height:11px;color:#444444;transform:scaleX(0.9507);'>000</span>
<span class="t" style='left:519.00px;top:128.20px;font:400 10.5px "Liberation Sans", sans-serif;line-height:12px;color:#6a6a6a;transform:scaleX(0.9882);'>Число</span>
<span class="t" style='left:645.00px;top:91.70px;font:400 12px "Liberation Sans", sans-serif;line-height:14px;color:#444444;transform:scaleX(0.9942);'>Условное</span>
<span class="t" style='left:620.00px;top:107.60px;font:400 12px "Liberation Sans", sans-serif;line-height:14px;color:#444444;transform:scaleX(0.9827);'>форматирование</span>
<span class="t" style='left:728.60px;top:91.70px;font:400 12px "Liberation Sans", sans-serif;line-height:14px;color:#444444;transform:scaleX(0.9859);'>Форматировать</span>
<span class="t" style='left:735.80px;top:107.60px;font:400 12px "Liberation Sans", sans-serif;line-height:14px;color:#444444;transform:scaleX(0.9799);'>как таблицу</span>
<span class="t" style='left:823.80px;top:91.70px;font:400 12px "Liberation Sans", sans-serif;line-height:14px;color:#444444;transform:scaleX(0.9626);'>Стили</span>
<span class="t" style='left:820.20px;top:107.60px;font:400 12px "Liberation Sans", sans-serif;line-height:14px;color:#444444;transform:scaleX(0.9596);'>ячеек</span>
<span class="t" style='left:723.80px;top:128.20px;font:400 10.5px "Liberation Sans", sans-serif;line-height:12px;color:#6a6a6a;transform:scaleX(1.0071);'>Стили</span>
<span class="t" style='left:893.60px;top:57.50px;font:400 12px "Liberation Sans", sans-serif;line-height:14px;color:#a6a6a6;transform:scaleX(0.9247);'>Вставить</span>
<span class="t" style='left:892.80px;top:80.50px;font:400 12px "Liberation Sans", sans-serif;line-height:14px;color:#444444;transform:scaleX(0.9569);'>Удалить</span>
<span class="t" style='left:893.60px;top:103.60px;font:400 12px "Liberation Sans", sans-serif;line-height:14px;color:#444444;transform:scaleX(0.9784);'>Формат</span>
<span class="t" style='left:896.40px;top:128.20px;font:400 10.5px "Liberation Sans", sans-serif;line-height:12px;color:#6a6a6a;transform:scaleX(1.1089);'>Ячейки</span>
<span class="t" style='left:1007.80px;top:91.70px;font:400 12px "Liberation Sans", sans-serif;line-height:14px;color:#444444;transform:scaleX(0.9760);'>Сортировка</span>
<span class="t" style='left:1011.80px;top:107.60px;font:400 12px "Liberation Sans", sans-serif;line-height:14px;color:#444444;transform:scaleX(0.9684);'>и фильтр</span>
<span class="t" style='left:1086.80px;top:91.70px;font:400 12px "Liberation Sans", sans-serif;line-height:14px;color:#444444;transform:scaleX(0.9684);'>Найти и</span>
<span class="t" style='left:1078.60px;top:107.60px;font:400 12px "Liberation Sans", sans-serif;line-height:14px;color:#444444;transform:scaleX(0.9499);'>выделить</span>
<span class="t" style='left:1011.80px;top:128.20px;font:400 10.5px "Liberation Sans", sans-serif;line-height:12px;color:#6a6a6a;transform:scaleX(1.0755);'>Редактирование</span>
<span class="t" style='left:1231.20px;top:3.20px;font:700 14.5px "Liberation Sans", sans-serif;line-height:16px;color:#666;transform:scaleX(0.7333);'>?</span>
<span class="t" style='left:264.20px;top:65.50px;font:400 13px "Liberation Sans", sans-serif;line-height:15px;color:#666;transform:scaleX(1.0222);'>A</span>
<span class="t" style='left:287.60px;top:67.50px;font:400 10.5px "Liberation Sans", sans-serif;line-height:12px;color:#666;transform:scaleX(1.0286);'>A</span>
<span class="t" style='left:275.20px;top:94.20px;font:400 14px "Liberation Sans", sans-serif;line-height:16px;color:#555;transform:scaleX(0.8200);'>A</span>
<span class="t" style='left:379.2px;top:70.2px;transform:rotate(-45deg) scaleX(0.92);transform-origin:0 0;font:400 12.5px "Liberation Sans", sans-serif;line-height:14px;color:#444;'>ab</span>
<span class="t" style='left:576.90px;top:94.80px;font:400 8px "Liberation Sans", sans-serif;line-height:9px;color:#333;transform:scaleX(0.8600);'>0</span>
<span class="t" style='left:572.80px;top:101.50px;font:400 8px "Liberation Sans", sans-serif;line-height:9px;color:#333;transform:scaleX(0.8572);'>00</span>
<span class="t" style='left:594.30px;top:94.80px;font:400 8px "Liberation Sans", sans-serif;line-height:9px;color:#333;transform:scaleX(0.9313);'>00</span>
<span class="t" style='left:599.10px;top:101.50px;font:400 8px "Liberation Sans", sans-serif;line-height:9px;color:#333;transform:scaleX(0.8000);'>0</span>
<span class="t" style='left:1025.20px;top:56.30px;font:700 15.5px "Liberation Sans", sans-serif;line-height:17px;color:#3b6ea5;transform:scaleX(0.9636);'>А</span>
<span class="t" style='left:1026.20px;top:71.50px;font:700 14px "Liberation Sans", sans-serif;line-height:16px;color:#8a5ba5;transform:scaleX(0.8600);'>Я</span>
<span class="t" style='left:12.00px;top:156.60px;font:400 17.5px "Liberation Serif", serif;line-height:20px;color:#444444;transform:scaleX(0.9675);'>B3</span>
<span class="t" style='left:218.40px;top:154.80px;font:italic 700 23px "Liberation Serif", serif;line-height:25px;color:#707070;transform:scaleX(0.9968);'>fx</span>
<span class="t" style='left:267.00px;top:158.60px;font:400 17.5px "Liberation Serif", serif;line-height:20px;color:#444444;transform:scaleX(1.0559);'>Ученик 2</span>
<span class="t" style='left:71.80px;top:198.80px;font:400 16px "Liberation Sans", sans-serif;line-height:17px;color:#444444;transform:scaleX(0.9091);'>A</span>
<span class="t" style='left:205.06px;top:198.80px;font:700 16px "Liberation Sans", sans-serif;line-height:17px;color:#217346;transform:scaleX(0.9400);'>B</span>
<span class="t" style='left:423.00px;top:198.80px;font:400 16px "Liberation Sans", sans-serif;line-height:17px;color:#444444;transform:scaleX(0.8182);'>C</span>
<span class="t" style='left:592.60px;top:198.80px;font:400 16px "Liberation Sans", sans-serif;line-height:17px;color:#444444;transform:scaleX(1.0000);'>D</span>
<span class="t" style='left:721.16px;top:198.80px;font:400 16px "Liberation Sans", sans-serif;line-height:17px;color:#444444;transform:scaleX(0.8444);'>E</span>
<span class="t" style='left:861.22px;top:198.80px;font:400 16px "Liberation Sans", sans-serif;line-height:17px;color:#444444;transform:scaleX(0.7778);'>F</span>
<span class="t" style='left:988.00px;top:198.80px;font:400 16px "Liberation Sans", sans-serif;line-height:17px;color:#444444;transform:scaleX(0.9667);'>G</span>
<span class="t" style='left:1143.70px;top:198.80px;font:400 16px "Liberation Sans", sans-serif;line-height:17px;color:#444444;transform:scaleX(1.1000);'>H</span>
<span class="t" style='left:1280.00px;top:198.80px;font:400 16px "Liberation Sans", sans-serif;line-height:17px;color:#444444;transform:scaleX(1.0000);'>I</span>
<span class="t" style='left:13.30px;top:255.80px;font:400 16px "Liberation Sans", sans-serif;line-height:17px;color:#444444;transform:scaleX(0.9000);'>1</span>
<span class="t" style='left:45.60px;top:236.80px;font:700 23px "Liberation Serif", serif;line-height:25px;color:#000;transform:scaleX(1.0419);'>округ</span>
<span class="t" style='left:161.00px;top:236.80px;font:700 23px "Liberation Serif", serif;line-height:25px;color:#000;transform:scaleX(1.0266);'>фамилия</span>
<span class="t" style='left:383.00px;top:236.80px;font:700 23px "Liberation Serif", serif;line-height:25px;color:#000;transform:scaleX(1.0180);'>предмет</span>
<span class="t" style='left:573.60px;top:236.60px;font:700 23px "Liberation Serif", serif;line-height:25px;color:#000;transform:scaleX(1.0060);'>балл</span>
<span class="t" style='left:7.93px;top:291.80px;font:400 16px "Liberation Sans", sans-serif;line-height:17px;color:#2626ac;transform:scaleX(1.0652);'>18</span>
<span class="t" style='left:67.00px;top:283.80px;font:400 23px "Liberation Serif", serif;line-height:25px;color:#000;transform:scaleX(1.0000);'>Ц</span>
<span class="t" style='left:120.00px;top:283.80px;font:400 23px "Liberation Serif", serif;line-height:25px;color:#000;transform:scaleX(1.0382);'>Ученик 17</span>
<span class="t" style='left:580.40px;top:285.80px;font:400 23px "Liberation Serif", serif;line-height:25px;color:#000;transform:scaleX(1.0235);'>619</span>
<span class="t" style='left:8.47px;top:327.80px;font:400 16px "Liberation Sans", sans-serif;line-height:17px;color:#2626ac;transform:scaleX(1.0652);'>27</span>
<span class="t" style='left:67.00px;top:319.80px;font:400 23px "Liberation Serif", serif;line-height:25px;color:#000;transform:scaleX(1.0000);'>Ц</span>
<span class="t" style='left:120.00px;top:319.80px;font:400 23px "Liberation Serif", serif;line-height:25px;color:#000;transform:scaleX(1.0382);'>Ученик 26</span>
<span class="t" style='left:580.40px;top:321.80px;font:400 23px "Liberation Serif", serif;line-height:25px;color:#000;transform:scaleX(1.0235);'>405</span>
<span class="t" style='left:8.47px;top:363.80px;font:400 16px "Liberation Sans", sans-serif;line-height:17px;color:#2626ac;transform:scaleX(1.0652);'>60</span>
<span class="t" style='left:67.00px;top:355.80px;font:400 23px "Liberation Serif", serif;line-height:25px;color:#000;transform:scaleX(1.0000);'>Ц</span>
<span class="t" style='left:120.00px;top:355.80px;font:400 23px "Liberation Serif", serif;line-height:25px;color:#000;transform:scaleX(1.0382);'>Ученик 59</span>
<span class="t" style='left:579.89px;top:357.80px;font:400 23px "Liberation Serif", serif;line-height:25px;color:#000;transform:scaleX(1.0235);'>569</span>
<span class="t" style='left:8.47px;top:399.80px;font:400 16px "Liberation Sans", sans-serif;line-height:17px;color:#2626ac;transform:scaleX(1.0652);'>67</span>
<span class="t" style='left:67.00px;top:391.80px;font:400 23px "Liberation Serif", serif;line-height:25px;color:#000;transform:scaleX(1.0000);'>Ц</span>
<span class="t" style='left:120.00px;top:391.80px;font:400 23px "Liberation Serif", serif;line-height:25px;color:#000;transform:scaleX(1.0382);'>Ученик 66</span>
<span class="t" style='left:579.89px;top:393.80px;font:400 23px "Liberation Serif", serif;line-height:25px;color:#000;transform:scaleX(1.0235);'>404</span>
<span class="t" style='left:8.47px;top:435.80px;font:400 16px "Liberation Sans", sans-serif;line-height:17px;color:#2626ac;transform:scaleX(1.0652);'>69</span>
<span class="t" style='left:67.00px;top:427.80px;font:400 23px "Liberation Serif", serif;line-height:25px;color:#000;transform:scaleX(1.0000);'>Ц</span>
<span class="t" style='left:120.00px;top:427.80px;font:400 23px "Liberation Serif", serif;line-height:25px;color:#000;transform:scaleX(1.0382);'>Ученик 68</span>
<span class="t" style='left:579.89px;top:429.80px;font:400 23px "Liberation Serif", serif;line-height:25px;color:#000;transform:scaleX(1.0235);'>327</span>
<span class="t" style='left:8.47px;top:471.80px;font:400 16px "Liberation Sans", sans-serif;line-height:17px;color:#2626ac;transform:scaleX(1.0652);'>71</span>
<span class="t" style='left:67.00px;top:463.80px;font:400 23px "Liberation Serif", serif;line-height:25px;color:#000;transform:scaleX(1.0000);'>Ц</span>
<span class="t" style='left:120.00px;top:463.80px;font:400 23px "Liberation Serif", serif;line-height:25px;color:#000;transform:scaleX(1.0382);'>Ученик 70</span>
<span class="t" style='left:579.89px;top:465.80px;font:400 23px "Liberation Serif", serif;line-height:25px;color:#000;transform:scaleX(1.0235);'>286</span>
<span class="t" style='left:8.47px;top:507.80px;font:400 16px "Liberation Sans", sans-serif;line-height:17px;color:#2626ac;transform:scaleX(1.0652);'>73</span>
<span class="t" style='left:67.00px;top:499.80px;font:400 23px "Liberation Serif", serif;line-height:25px;color:#000;transform:scaleX(1.0000);'>Ц</span>
<span class="t" style='left:120.00px;top:499.80px;font:400 23px "Liberation Serif", serif;line-height:25px;color:#000;transform:scaleX(1.0382);'>Ученик 72</span>
<span class="t" style='left:580.40px;top:501.80px;font:400 23px "Liberation Serif", serif;line-height:25px;color:#000;transform:scaleX(1.0235);'>613</span>
<span class="t" style='left:8.47px;top:543.80px;font:400 16px "Liberation Sans", sans-serif;line-height:17px;color:#2626ac;transform:scaleX(1.0652);'>74</span>
<span class="t" style='left:67.00px;top:535.80px;font:400 23px "Liberation Serif", serif;line-height:25px;color:#000;transform:scaleX(1.0000);'>Ц</span>
<span class="t" style='left:120.00px;top:535.80px;font:400 23px "Liberation Serif", serif;line-height:25px;color:#000;transform:scaleX(1.0382);'>Ученик 73</span>
<span class="t" style='left:579.89px;top:537.80px;font:400 23px "Liberation Serif", serif;line-height:25px;color:#000;transform:scaleX(1.0235);'>500</span>
<span class="t" style='left:8.47px;top:579.80px;font:400 16px "Liberation Sans", sans-serif;line-height:17px;color:#2626ac;transform:scaleX(1.0652);'>96</span>
<span class="t" style='left:67.00px;top:571.80px;font:400 23px "Liberation Serif", serif;line-height:25px;color:#000;transform:scaleX(1.0000);'>Ц</span>
<span class="t" style='left:120.00px;top:571.80px;font:400 23px "Liberation Serif", serif;line-height:25px;color:#000;transform:scaleX(1.0382);'>Ученик 95</span>
<span class="t" style='left:579.89px;top:573.80px;font:400 23px "Liberation Serif", serif;line-height:25px;color:#000;transform:scaleX(1.0235);'>752</span>
<span class="t" style='left:3.47px;top:615.80px;font:400 16px "Liberation Sans", sans-serif;line-height:17px;color:#2626ac;transform:scaleX(1.1297);'>110</span>
<span class="t" style='left:67.00px;top:607.80px;font:400 23px "Liberation Serif", serif;line-height:25px;color:#000;transform:scaleX(1.0000);'>Ц</span>
<span class="t" style='left:120.00px;top:607.80px;font:400 23px "Liberation Serif", serif;line-height:25px;color:#000;transform:scaleX(1.0382);'>Ученик 109</span>
<span class="t" style='left:579.89px;top:609.80px;font:400 23px "Liberation Serif", serif;line-height:25px;color:#000;transform:scaleX(1.0235);'>753</span>
<span class="t" style='left:2.80px;top:651.80px;font:400 16px "Liberation Sans", sans-serif;line-height:17px;color:#2626ac;transform:scaleX(1.1297);'>120</span>
<span class="t" style='left:67.00px;top:643.80px;font:400 23px "Liberation Serif", serif;line-height:25px;color:#000;transform:scaleX(1.0000);'>Ц</span>
<span class="t" style='left:120.00px;top:643.80px;font:400 23px "Liberation Serif", serif;line-height:25px;color:#000;transform:scaleX(1.0382);'>Ученик 119</span>
<span class="t" style='left:580.40px;top:645.80px;font:400 23px "Liberation Serif", serif;line-height:25px;color:#000;transform:scaleX(1.0235);'>672</span>
<span class="t" style='left:312.80px;top:282.00px;font:400 12px "Liberation Sans", sans-serif;line-height:14px;color:#444444;transform:scaleX(0.9670);'>Сортировка от <u>А</u> до Я</span>
<span class="t" style='left:312.80px;top:306.00px;font:400 12px "Liberation Sans", sans-serif;line-height:14px;color:#444444;transform:scaleX(0.9618);'>Сортировка от <u>Я</u> до А</span>
<span class="t" style='left:312.80px;top:330.00px;font:400 12px "Liberation Sans", sans-serif;line-height:14px;color:#444444;transform:scaleX(0.9870);'><u>С</u>ортировка по цвету</span>
<span class="t" style='left:312.40px;top:355.80px;font:400 12px "Liberation Sans", sans-serif;line-height:14px;color:#b2b2b2;transform:scaleX(0.9846);'><u>У</u>далить фильтр из столбца "предмет"</span>
<span class="t" style='left:312.40px;top:379.80px;font:400 12px "Liberation Sans", sans-serif;line-height:14px;color:#b2b2b2;transform:scaleX(0.9893);'><u>Ф</u>ильтр по цвету</span>
<span class="t" style='left:313.00px;top:403.80px;font:400 12px "Liberation Sans", sans-serif;line-height:14px;color:#444444;transform:scaleX(0.9800);'>Текстовые <u>ф</u>ильтры</span>
<span class="t" style='left:313.80px;top:432.00px;font:400 12px "Liberation Sans", sans-serif;line-height:14px;color:#7a7a7a;transform:scaleX(1.0058);'>Поиск</span>
<span class="t" style='left:349.40px;top:456.00px;font:400 11px "Liberation Sans", sans-serif;line-height:12px;color:#000;transform:scaleX(0.9511);'>(Выделить все)</span>
<span class="t" style='left:348.80px;top:472.00px;font:400 11px "Liberation Sans", sans-serif;line-height:12px;color:#000;transform:scaleX(1.0661);'>английский язык</span>
<span class="t" style='left:348.80px;top:487.40px;font:400 11px "Liberation Sans", sans-serif;line-height:12px;color:#000;transform:scaleX(1.0735);'>биология</span>
<span class="t" style='left:348.80px;top:503.40px;font:400 11px "Liberation Sans", sans-serif;line-height:12px;color:#000;transform:scaleX(1.0590);'>география</span>
<span class="t" style='left:348.80px;top:519.40px;font:400 11px "Liberation Sans", sans-serif;line-height:12px;color:#000;transform:scaleX(1.0430);'>информатика</span>
<span class="t" style='left:348.80px;top:535.40px;font:400 11px "Liberation Sans", sans-serif;line-height:12px;color:#000;transform:scaleX(1.0406);'>история</span>
<span class="t" style='left:348.80px;top:551.40px;font:400 11px "Liberation Sans", sans-serif;line-height:12px;color:#000;transform:scaleX(0.9891);'>литература</span>
<span class="t" style='left:348.80px;top:567.40px;font:400 11px "Liberation Sans", sans-serif;line-height:12px;color:#000;transform:scaleX(1.0074);'>математика</span>
<span class="t" style='left:348.80px;top:583.40px;font:400 11px "Liberation Sans", sans-serif;line-height:12px;color:#000;transform:scaleX(1.0403);'>обществознание</span>
<span class="t" style='left:348.80px;top:599.40px;font:400 11px "Liberation Sans", sans-serif;line-height:12px;color:#000;transform:scaleX(1.0326);'>русский язык</span>
<span class="t" style='left:412.60px;top:641.00px;font:400 12px "Liberation Sans", sans-serif;line-height:14px;color:#000;transform:scaleX(0.8307);'>OK</span>
<span class="t" style='left:483.60px;top:641.00px;font:400 12px "Liberation Sans", sans-serif;line-height:14px;color:#000;transform:scaleX(0.9175);'>Отмена</span>
<span class="t" style='left:112.00px;top:684.60px;font:700 12px "Liberation Sans", sans-serif;line-height:14px;color:#217346;transform:scaleX(0.9902);'>Лист1</span>
<span class="t" style='left:173.60px;top:684.60px;font:400 12px "Liberation Sans", sans-serif;line-height:14px;color:#444444;transform:scaleX(0.9917);'>Лист2</span>
<span class="t" style='left:233.00px;top:684.60px;font:400 12px "Liberation Sans", sans-serif;line-height:14px;color:#444444;transform:scaleX(0.9978);'>Лист3</span>
<span class="t" style='left:293.00px;top:684.60px;font:400 12px "Liberation Sans", sans-serif;line-height:14px;color:#444444;transform:scaleX(1.0159);'>Лист4</span>
<span class="t" style='left:7.80px;top:711.00px;font:400 11.5px "Liberation Sans", sans-serif;line-height:12px;color:#fff;transform:scaleX(0.9207);'>ГОТОВО</span>
<span class="t" style='left:67.80px;top:711.00px;font:400 11.5px "Liberation Sans", sans-serif;line-height:12px;color:#fff;transform:scaleX(0.9277);'>НАЙДЕНО ЗАПИСЕЙ: 103 ИЗ 1000</span>
<span class="t" style='left:1331.00px;top:709.40px;font:400 12px "Liberation Sans", sans-serif;line-height:14px;color:#fff;transform:scaleX(0.8381);'>130%</span>
<span class="t" style='left:287.20px;top:279.90px;font:700 8.5px "Liberation Sans", sans-serif;line-height:10px;color:#3b6ea5;transform:scaleX(1.0000);'>А</span>
<span class="t" style='left:287.20px;top:287.40px;font:700 8.5px "Liberation Sans", sans-serif;line-height:10px;color:#8a5ba5;transform:scaleX(0.9667);'>Я</span>
<span class="t" style='left:287.20px;top:303.70px;font:700 8.5px "Liberation Sans", sans-serif;line-height:10px;color:#8a5ba5;transform:scaleX(0.9667);'>Я</span>
<span class="t" style='left:287.20px;top:311.20px;font:700 8.5px "Liberation Sans", sans-serif;line-height:10px;color:#3b6ea5;transform:scaleX(1.0000);'>А</span>
</div>
</body></html>
